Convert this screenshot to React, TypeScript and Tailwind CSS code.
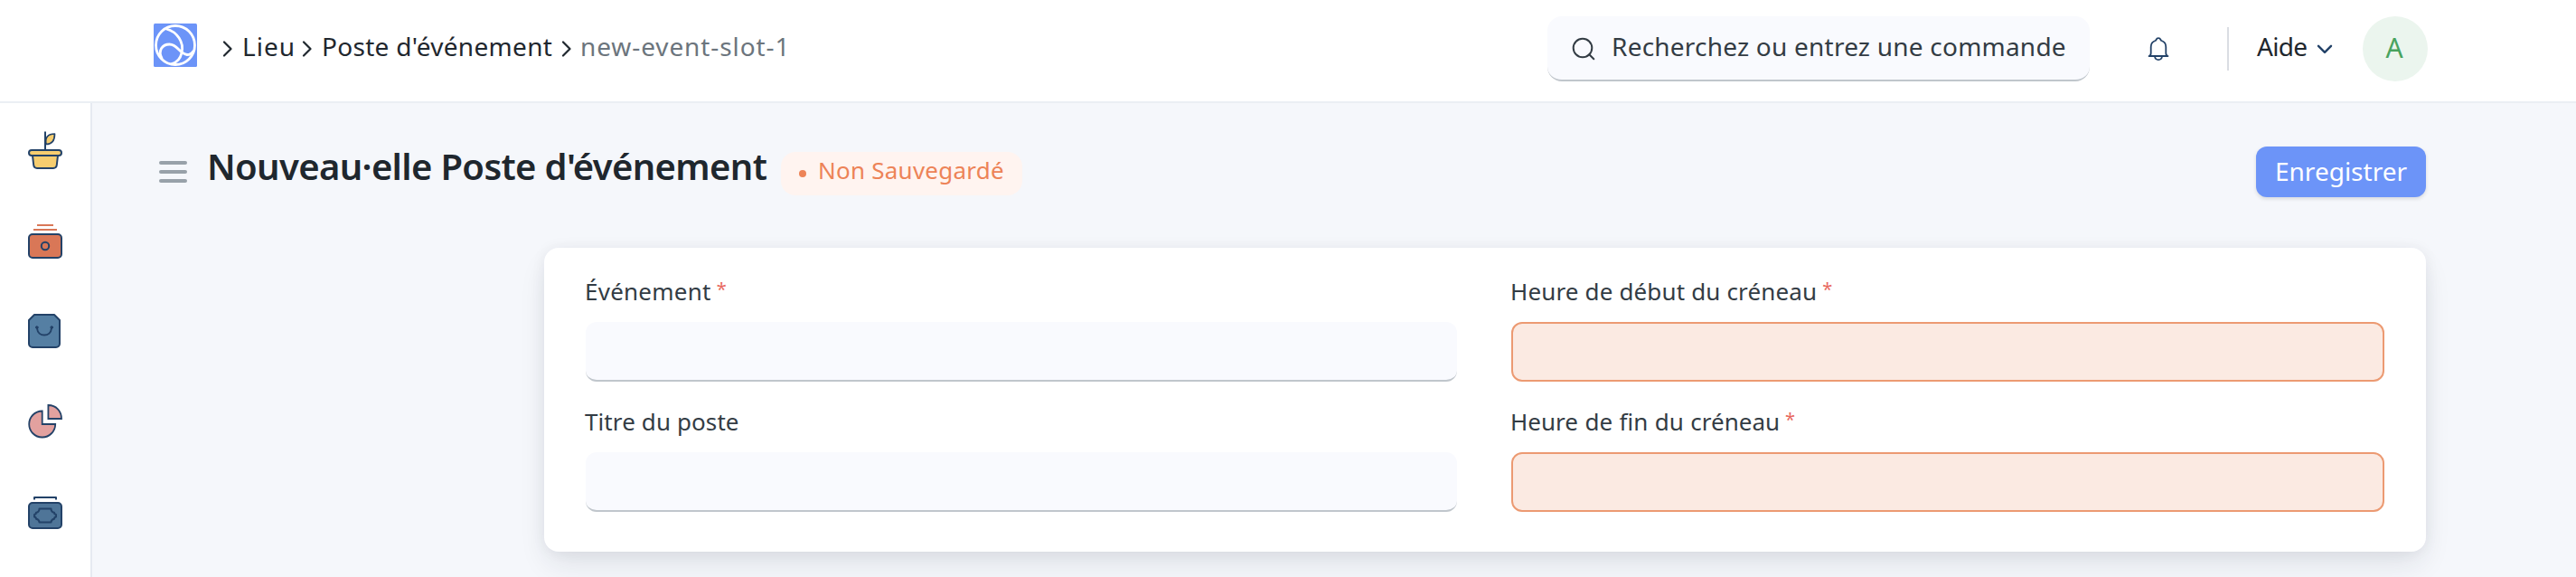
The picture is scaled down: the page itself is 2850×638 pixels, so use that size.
import type { ReactNode } from 'react';

const NAVY = '#234268';

function SideIcon({ children }: { children: ReactNode }) {
  return (
    <svg
      width="40"
      height="44"
      viewBox="0 0 40 44"
      fill="none"
      stroke={NAVY}
      strokeWidth="2"
      strokeLinecap="round"
      strokeLinejoin="round"
    >
      {children}
    </svg>
  );
}

function Sidebar() {
  return (
    <nav className="flex w-[102px] shrink-0 flex-col gap-14 border-r-2 border-[#e6eaf1] bg-white pt-[30px] pl-[30px]">
      <SideIcon>
        <path d="M20 21V1.500" strokeLinecap="butt" />
        <path d="M21 15.500C19.500 8 23 4 30.500 4C30.500 11 28 15.500 21 15.500z" fill="#f6cd6f" strokeWidth="1.700" />
        <path d="M6 28l1.200 10.500c.3 2.500 1.500 3.500 3.800 3.500h18c2.300 0 3.500-1 3.800-3.500L34 28z" fill="#f6cd6f" />
        <rect x="2" y="22" width="36" height="6" rx="3" fill="#f6cd6f" />
      </SideIcon>
      <SideIcon>
        <path d="M11 5h18M7 10h26" stroke="#d97757" strokeLinecap="butt" />
        <rect x="2" y="15" width="36" height="26" rx="4" fill="#d97757" />
        <circle cx="20" cy="28" r="4.200" />
      </SideIcon>
      <SideIcon>
        <path d="M8 4h22l6 6v26a4 4 0 0 1-4 4H6a4 4 0 0 1-4-4V10z" fill="#557fa3" />
        <path d="M11 19c1 10 15 10 16 0" />
        <circle cx="10.800" cy="18" r="1.300" fill={NAVY} strokeWidth="1" />
        <circle cx="27.200" cy="18" r="1.300" fill={NAVY} strokeWidth="1" />
      </SideIcon>
      <SideIcon>
        <path d="M16.700 10.500a14.500 14.500 0 1 0 14.500 14.500H16.700z" fill="#e2a19f" strokeWidth="1.800" strokeLinejoin="miter" />
        <path d="M23.400 4v15H38c0-8.500-6-15-14.600-15z" fill="#e2a19f" strokeWidth="1.800" strokeLinejoin="miter" />
      </SideIcon>
      <SideIcon>
        <g transform="translate(0 -1)">
          <path d="M8 9.500V7h24v2.500" strokeLinecap="butt" />
          <rect x="2" y="13" width="36" height="28" rx="4" fill="#4f7598" />
          <path d="M13.500 19.500h13c0 2.500 2 4 3.500 4.300c0 1.200.6 2 2 2.200v2.500c-1.400.2-2 1-2 2.200c-1.500.3-3.500 1.500-3.500 3.800h-13c0-2.300-2-3.500-3.500-3.800c0-1.200-.6-2-2-2.200v-2.500c1.400-.2 2-1 2-2.200c1.500-.3 3.500-1.800 3.500-4.300z" />
        </g>
      </SideIcon>
    </nav>
  );
}

function Logo() {
  return (
    <svg width="48" height="48" viewBox="0 0 48 48" className="mt-[-2px] shrink-0">
      <rect width="48" height="48" rx="1.500" fill="#6c94f8" />
      <g fill="none" stroke="#fff" strokeWidth="2.800" strokeLinecap="round">
        <circle cx="24" cy="24" r="21.500" />
        <path d="M14 6C26 9 34 21 31 32.500C29.500 39 26 43 20 44.500" />
        <path d="M9 38.500C4.500 30 9.500 23 17.500 23C26.500 23 28.500 33.500 37 34.500C40 34.500 42 33.500 43.500 31" />
      </g>
    </svg>
  );
}

function Crumb({ className }: { className: string }) {
  return (
    <svg width="12" height="18" viewBox="0 0 12 18" className={`mt-[6px] shrink-0 ${className}`}>
      <path d="M2 1.500L9.500 9L2 16.500" fill="none" stroke="#1f272e" strokeWidth="2.200" strokeLinecap="round" strokeLinejoin="round" />
    </svg>
  );
}

function Header() {
  return (
    <header className="flex h-[114px] shrink-0 border-b-2 border-[#ebeff4] bg-white pl-[170px] text-[28px] leading-[38px] text-[#1f272e]">
      <div className="flex h-[102px] w-[1542px] items-center whitespace-nowrap">
        <Logo />
        <Crumb className="ml-[28px]" />
        <span className="ml-[10px] w-[66px] tracking-[1px]">Lieu</span>
        <Crumb className="" />
        <span className="ml-[10px] w-[265px] tracking-[0.3px]">Poste d'événement</span>
        <Crumb className="" />
        <span className="ml-[9px] tracking-[0.9px] text-[#6c757d]">new-event-slot-1</span>
      </div>
      <div className="mt-[18px] flex h-[72px] w-[600px] items-center rounded-[16px] border-b-2 border-[#c0c6cc] bg-[#f9fafe] pb-1 pl-[27px] whitespace-nowrap text-[#333c44]">
        <svg width="26" height="26" viewBox="0 0 26 26" className="mt-[5px] shrink-0" fill="none" stroke="#333c44" strokeWidth="2" strokeLinecap="round">
          <circle cx="12" cy="12" r="10.300" />
          <path d="M19.300 19.300l5 5" />
        </svg>
        <span className="ml-[18px] tracking-[0.22px]">Recherchez ou entrez une commande</span>
      </div>
      <svg width="24" height="28" viewBox="0 0 24 28" className="mt-[40px] ml-[64px] shrink-0" fill="none" stroke={NAVY} strokeWidth="1.800" strokeLinecap="round" strokeLinejoin="round">
        <path d="M1.500 22h21c-1.700-.5-2.200-1.700-2.200-3.300V12c0-3.300-1.800-6-4.800-7c-.7-.3-1-.8-1.200-1.400c-.7-2.100-3.900-2.100-4.600 0c-.2.600-.5 1.100-1.200 1.400c-3 1-4.800 3.700-4.800 7v6.700c0 1.600-.5 2.800-2.200 3.300z" />
        <path d="M8 22.500c.3 2.300 1.800 3.600 4 3.600s3.700-1.300 4-3.600" />
      </svg>
      <div className="mt-[30px] ml-[64px] h-12 w-[2px] bg-[#dadde3]" />
      <div className="mt-8 ml-[31px] flex h-[38px] w-[117px]">
        <span className="w-[66px] tracking-[-0.7px]">Aide</span>
        <svg width="18" height="11" viewBox="0 0 18 11" className="mt-[17px]">
          <path d="M2 1.800L9 8.800L16 1.800" fill="none" stroke={NAVY} strokeWidth="2.400" strokeLinecap="round" strokeLinejoin="round" />
        </svg>
      </div>
      <div className="mt-[18px] flex size-[72px] items-center justify-center rounded-full bg-[#ebf5ee] pr-[2px] pb-[2px] text-[30px] text-[#48a35e]">
        A
      </div>
    </header>
  );
}

function Field({ label, track, required, missing }: { label: string; track: string; required?: boolean; missing?: boolean }) {
  return (
    <div className="flex flex-col">
      <div className="flex h-[36px] text-[26px] leading-[36px] whitespace-nowrap text-[#333c44]">
        <span className={`ml-[-1px] ${track}`}>{label}</span>
        {required && <span className="ml-[6px] text-[20px] leading-[32px] text-[#e8685e]">*</span>}
      </div>
      <div
        className={
          missing
            ? 'mt-4 h-[66px] rounded-[12px] border-2 border-[#ec9a72] bg-[#fbeae2]'
            : 'mt-4 h-[66px] rounded-[12px] border-b-2 border-[#c0c6cc] bg-[#f9fafe]'
        }
      />
    </div>
  );
}

export default function App() {
  return (
    <div className="flex h-[638px] w-[2850px] flex-col overflow-hidden bg-[#f5f7fb] font-['Noto_Sans',sans-serif]">
      <Header />
      <div className="flex flex-1">
        <Sidebar />
        <main className="flex w-[2582px] flex-col pl-[74px]">
          <div className="flex h-[160px] whitespace-nowrap">
            <div className="mt-[64px] flex w-[31px] flex-col gap-[6px]">
              <div className="h-1 rounded-full bg-[#98a1a9]" />
              <div className="h-1 rounded-full bg-[#98a1a9]" />
              <div className="h-1 rounded-full bg-[#98a1a9]" />
            </div>
            <h1 className="mt-[42px] ml-[22px] h-[56px] w-[635px] text-[40px] leading-[56px] font-semibold tracking-[-0.66px] text-[#1f272e]">
              Nouveau·elle Poste d'événement
            </h1>
            <div className="mt-[54px] flex h-12 w-[267px] items-center rounded-[16px] bg-[#fff4f0] pb-2 pl-5 text-[26px] text-[#ed8357]">
              <span className="mt-[7px] size-2 rounded-full bg-[#ed8357]" />
              <span className="ml-[13px] tracking-[0.24px]">Non Sauvegardé</span>
            </div>
            <button className="mt-12 ml-auto flex h-14 w-[188px] items-center justify-center rounded-[12px] bg-[#6c94f8] pb-[2px] text-[28px] text-white shadow-[0_2px_4px_rgba(0,0,0,0.12)]">
              Enregistrer
            </button>
          </div>
          <section className="ml-[426px] grid h-[336px] w-[2082px] grid-cols-[964px_966px] content-start gap-x-[60px] gap-y-[26px] rounded-[16px] bg-white pt-[30px] pl-[46px] shadow-[0_16px_32px_-4px_rgba(25,39,52,0.11),0_0_16px_rgba(25,39,52,0.06)]">
            <Field label="Événement" track="tracking-[0.24px]" required />
            <Field label="Heure de début du créneau" track="tracking-[0.15px]" required missing />
            <Field label="Titre du poste" track="tracking-[0.1px]" />
            <Field label="Heure de fin du créneau" track="[word-spacing:0.75px]" required missing />
          </section>
        </main>
      </div>
    </div>
  );
}
